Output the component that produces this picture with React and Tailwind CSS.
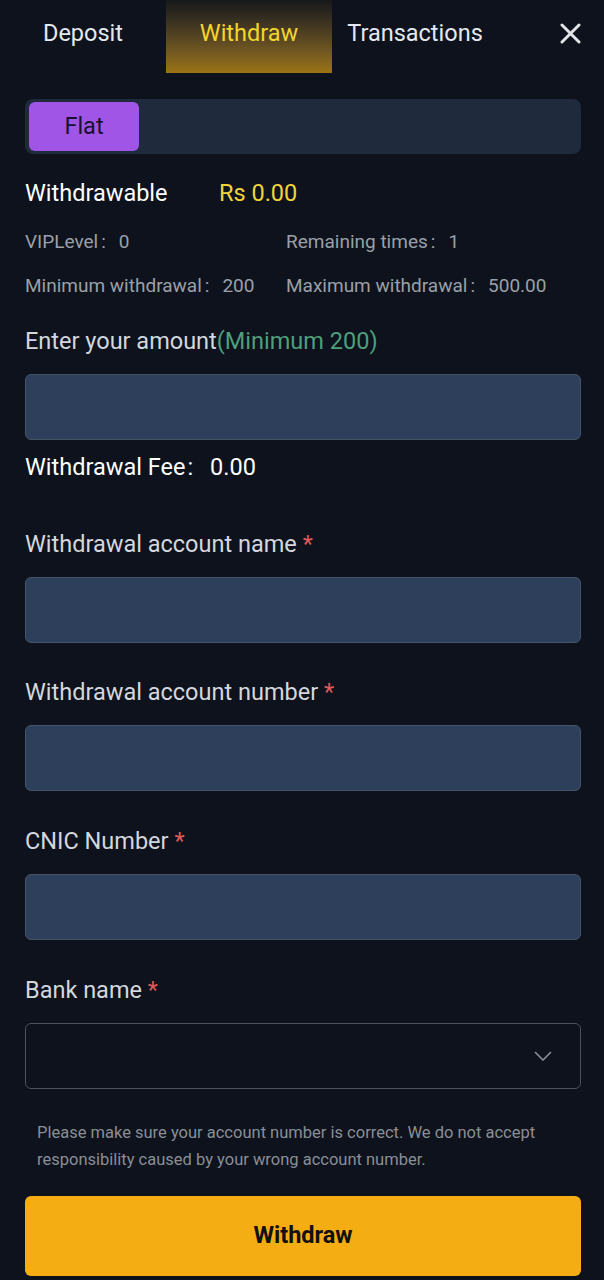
import { useState } from "react";

const Field = ({ label, children, className = "" }) => (
   <div className={className}>
      <div className="h-[30px] leading-[30px] text-[23.5px] text-[#d4d7dd]">
         {label} <span className="text-[#e05a5a]">*</span>
      </div>
      <div className="mt-[18px]">{children}</div>
   </div>
);

const TextInput = () => (
   <input
      type="text"
      className="block w-full h-[66px] rounded-md bg-[#2d3f5b] border border-[#465265] px-3 text-white text-[20px] outline-none"
   />
);

const Stat = ({ label, value }) => (
   <span>
      {label}<span className="ml-[3px]">:</span><span className="ml-[13px]">{value}</span>
   </span>
);

const App = () => {
   const [tab, setTab] = useState("Withdraw");
   const tabs = ["Deposit", "Withdraw", "Transactions"];

   return (
      <div className="min-h-[1280px] w-[604px] bg-[#0d121c] font-['Roboto',sans-serif] text-white">
         {/*header*/}
         <div className="flex h-[73px] items-stretch">
            {tabs.map((t) => (
               <button
                  key={t}
                  type="button"
                  onClick={() => setTab(t)}
                  className={
                     t === tab
                        ? "w-[166px] pb-[6px] text-[23.5px] text-[#f3d52f] bg-gradient-to-b from-[#17181a] to-[#9c7414]"
                        : "w-[166px] pb-[6px] text-[23.5px] text-[#e4e8ef]"
                  }
               >
                  {t}
               </button>
            ))}
            <div className="flex flex-1 items-center justify-end pr-[23px] pb-[6px]">
               <svg width="21" height="21" viewBox="0 0 21 21" stroke="#e2e4e8" strokeWidth="3" strokeLinecap="round">
                  <path d="M2 2 L19 19 M19 2 L2 19" />
               </svg>
            </div>
         </div>

         <div className="pl-[25px] pr-[23px]">
            {/*type selector*/}
            <div className="mt-[26px] h-[55px] rounded-lg bg-[#1f2a3c] p-[3px] flex">
               <button type="button" className="ml-[1px] w-[110px] h-full rounded-md bg-[#a155e6] text-[23.5px] text-[#1a1030]">
                  Flat
               </button>
            </div>

            {/*balance*/}
            <div className="mt-[25px] flex h-[30px] items-center text-[23.5px]">
               <span className="w-[194px] text-white">Withdrawable</span>
               <span className="text-[#f2d33c]">Rs 0.00</span>
            </div>
            <div className="mt-[19px] grid grid-cols-[261px_1fr] h-[24px] items-center text-[19px] text-[#9aa0a9]">
               <Stat label="VIPLevel" value="0" />
               <Stat label="Remaining times" value="1" />
            </div>
            <div className="mt-[20px] grid grid-cols-[261px_1fr] h-[24px] items-center text-[19px] text-[#9aa0a9]">
               <Stat label="Minimum withdrawal" value="200" />
               <Stat label="Maximum withdrawal" value="500.00" />
            </div>

            {/*amount*/}
            <div className="mt-[30px] h-[30px] leading-[30px] text-[23.5px] text-[#d4d7dd]">
               Enter your amount<span className="text-[#4e9f7c]">(Minimum 200)</span>
            </div>
            <div className="mt-[18px]">
               <TextInput />
            </div>
            <div className="mt-[12px] h-[30px] leading-[30px] text-[23.5px] text-white">
               Withdrawal Fee<span className="ml-[2px]">:</span><span className="ml-[17px]">0.00</span>
            </div>

            <Field label="Withdrawal account name" className="mt-[47px]">
               <TextInput />
            </Field>
            <Field label="Withdrawal account number" className="mt-[34px]">
               <TextInput />
            </Field>
            <Field label="CNIC Number" className="mt-[35px]">
               <TextInput />
            </Field>
            <Field label="Bank name" className="mt-[35px]">
               <div className="flex h-[66px] items-center justify-end rounded-md border border-[#4a5260] pr-[28px]">
                  <svg width="18" height="10" viewBox="0 0 18 10" fill="none" stroke="#8a909a" strokeWidth="1.6">
                     <path d="M1 1 L9 9 L17 1" />
                  </svg>
               </div>
            </Field>

            {/*note*/}
            <p className="mt-[30px] pl-[12px] text-[16.5px] leading-[27px] text-[#8a8e96]">
               Please make sure your account number is correct. We do not accept responsibility caused by your wrong account number.
            </p>

            <button
               type="button"
               className="mt-[23px] w-full h-[80px] rounded-md bg-[#f5ad14] text-[23.5px] font-bold text-[#111]"
            >
               Withdraw
            </button>
         </div>
      </div>
   );
};

export default App;
